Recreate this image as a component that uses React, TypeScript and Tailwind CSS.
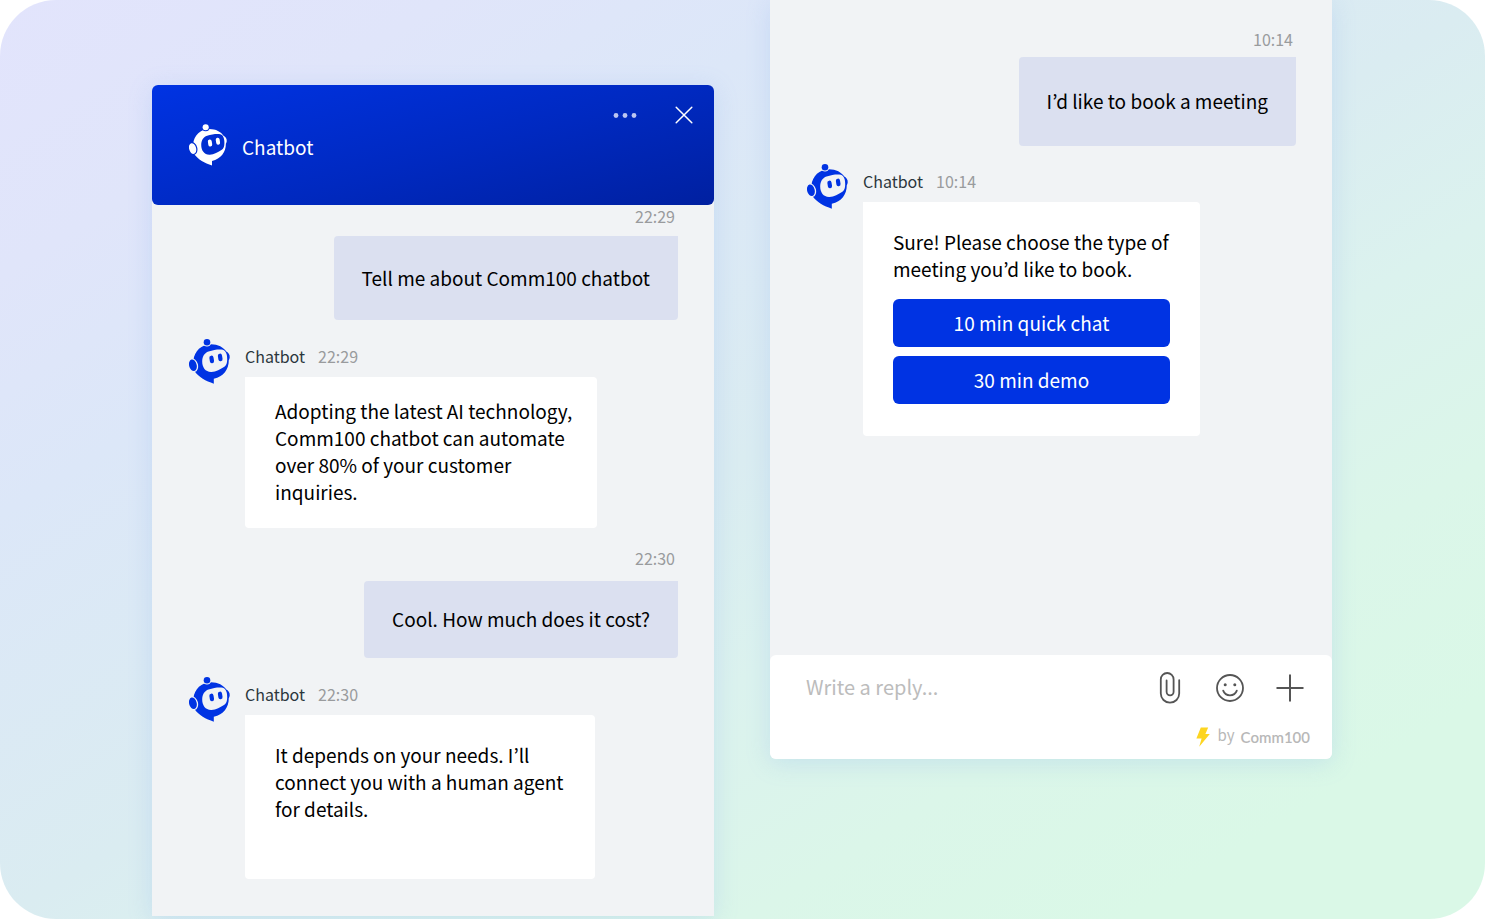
import { useId, type ReactNode } from "react";

const BODY = "text-[19px] leading-[27px]";

function RobotIcon({ className }: { className: string }) {
  const id = useId();
  return (
    <svg viewBox="0 0 41 45" className={className} fill="currentColor" aria-hidden="true">
      <mask id={id} maskUnits="userSpaceOnUse" x="0" y="0" width="42" height="46">
        <rect width="42" height="46" fill="white" />
        <circle cx="18" cy="3.3" r="4.3" fill="black" />
        <ellipse cx="4" cy="26.3" rx="5" ry="7" transform="rotate(-14 4 26.3)" fill="black" />
        <path
          d="M19.5 12.6C25 10.7 30 10.2 33.8 10.8C37 11.4 38.4 16 38.2 20.5C38.1 24 37.4 26.4 35.4 27.7C31.5 30.2 27 32.8 22.4 33C16.5 33.2 13.2 28.6 13.2 22.6C13.2 17.4 15.6 14 19.5 12.6Z"
          fill="black"
        />
      </mask>
      <g mask={`url(#${id})`}>
        <path d="M22 5.2C29 5.2 34.6 8.3 37.3 12.6C39.5 13.8 41 16 40.7 18.4C40.5 19.8 40.1 20.4 39.8 21C39.8 30.5 34.5 37.6 24.8 39.8L24.8 44.7C17 42.3 9.5 38 5.8 32.6C4.2 28.8 4 25.5 4.4 21.5C5.4 12 12.5 5.2 22 5.2Z" />
      </g>
      <circle cx="18" cy="3.3" r="3.3" />
      <ellipse cx="3.9" cy="26.3" rx="3.8" ry="5.9" transform="rotate(-14 3.9 26.3)" />
      <rect x="20.6" y="16.6" width="4.2" height="7.6" rx="2.1" transform="rotate(-9 22.7 20.4)" />
      <rect x="29.1" y="14.6" width="4.2" height="7.6" rx="2.1" transform="rotate(-9 31.2 18.4)" />
    </svg>
  );
}

function UserMessage({ time, gap, bubble, children }: { time: string; gap: string; bubble: string; children: ReactNode }) {
  return (
    <div className={`flex flex-col items-end ${gap}`}>
      <time className="pr-[3px] text-[16px] leading-[22px] text-[#999b9d]">{time}</time>
      <p className={`flex items-center rounded-[4px] rounded-tr-none bg-[#dbe0f0] px-7 pb-0.5 ${BODY} ${bubble}`}>{children}</p>
    </div>
  );
}

function BotMessage({ time, bubble, children }: { time: string; bubble: string; children: ReactNode }) {
  return (
    <div className="flex items-start gap-[15px]">
      <RobotIcon className="h-[45px] w-[41px] shrink-0 text-[#0033e3]" />
      <div className="flex min-w-0 flex-col items-start gap-2.5 pt-1.5">
        <div className="flex gap-[13px] text-[16px] leading-[22px]">
          <span className="text-[#2b363c]">Chatbot</span>
          <time className="text-[#999b9d]">{time}</time>
        </div>
        <div className={`rounded-[4px] rounded-tl-none bg-white pr-[22px] pl-[30px] ${BODY} ${bubble}`}>{children}</div>
      </div>
    </div>
  );
}

function ChoiceButton({ children }: { children: ReactNode }) {
  return (
    <button type="button" className={`h-12 w-full rounded-[6px] bg-[#0033e3] pb-0.5 text-center text-white ${BODY}`}>
      {children}
    </button>
  );
}

const ICON_LINE = {
  fill: "none",
  stroke: "currentColor",
  strokeWidth: 1.8,
  strokeLinecap: "round",
  strokeLinejoin: "round",
} as const;

function Composer() {
  return (
    <form className="rounded-[6px] bg-white px-[22px] pt-3 pb-2.5">
      <div className="flex h-10 items-center pr-1.5 pl-3.5">
        <input
          type="text"
          aria-label="Write a reply"
          placeholder="Write a reply..."
          className="min-w-0 flex-1 bg-transparent text-[20px] leading-7 text-black outline-none placeholder:text-[#bcbcbc]"
        />
        <div className="flex items-center gap-8 pt-px text-[#555]">
          <button type="button" aria-label="Attach file">
            <svg viewBox="0 0 28 32" className="h-8 w-7" {...ICON_LINE}>
              <path d="M23.2 8.2V21.5A9.2 9.2 0 0 1 4.8 21.5V7.4A6.4 6.4 0 0 1 17.6 7.4V19.8A3.5 3.5 0 0 1 10.6 19.8V8.4" />
            </svg>
          </button>
          <button type="button" aria-label="Insert emoji">
            <svg viewBox="0 0 28 28" className="size-7" {...ICON_LINE}>
              <circle cx="14" cy="14" r="13" />
              <path d="M7.2 16.6C8.4 19.8 10.9 21.3 14 21.3S19.6 19.8 20.8 16.6" />
              <circle cx="9.2" cy="10.8" r="1.5" fill="currentColor" stroke="none" />
              <circle cx="18.8" cy="10.8" r="1.5" fill="currentColor" stroke="none" />
            </svg>
          </button>
          <button type="button" aria-label="More options">
            <svg viewBox="0 0 28 28" className="size-7" fill="none" stroke="currentColor" strokeWidth="2">
              <path d="M14 .5V27.5M.5 14H27.5" />
            </svg>
          </button>
        </div>
      </div>
      <div className="mt-[18px] flex h-6 items-center justify-end text-[#b8b8b8]">
        <svg viewBox="0 0 14 20" className="mr-2 h-5 w-3.5" fill="#fdd521" aria-hidden="true">
          <path d="M4.8.5H12.2L9.4 7H13.8L3.2 19.7L5.6 11.5H.4Z" />
        </svg>
        <span className="mr-1.5 pb-1 text-[15px] leading-5">by</span>
        <span className="font-[Lato] text-[15px] leading-6 font-semibold">Comm100</span>
      </div>
    </form>
  );
}

const PANEL = "min-w-0 flex-1 bg-[#f1f3f5] shadow-[0_4px_24px_rgba(120,165,235,0.22)]";

export default function App() {
  return (
    <main className="bg-white pb-px font-['Noto_Sans_CJK_KR',sans-serif] text-black">
      <div className="flex items-start gap-14 overflow-hidden rounded-[56px] bg-[linear-gradient(to_bottom_right,#e2e4fc_0%,#e0e5fa_15%,#dce7f8_28%,#daecf1_50%,#dbf2ee_62%,#dbf6e9_75%,#daf8e7_88%)] pr-[153px] pb-[3px] pl-[152px]">
        <section aria-label="Chatbot conversation" className={`mt-[85px] rounded-t-[6px] ${PANEL}`}>
          <header className="flex h-[120px] items-start justify-between rounded-[6px] bg-[linear-gradient(165deg,#0033e3_0%,#0029c0_55%,#0020a0_100%)] pr-[21px] pl-[37px] text-white">
            <div className="flex items-center gap-[15px] pt-[39px]">
              <RobotIcon className="h-[42px] w-[38px]" />
              <h1 className="pt-[3px] text-[19px] leading-7">Chatbot</h1>
            </div>
            <div className="flex items-center gap-[38px] pt-[21px]">
              <button type="button" aria-label="Menu">
                <svg viewBox="0 0 24 18" className="h-[18px] w-6" fill="#bcc6f1">
                  <circle cx="3" cy="9.5" r="2.4" />
                  <circle cx="12" cy="9.5" r="2.4" />
                  <circle cx="21" cy="9.5" r="2.4" />
                </svg>
              </button>
              <button type="button" aria-label="Close">
                <svg viewBox="0 0 18 18" className="size-[18px]" {...ICON_LINE} strokeWidth={1.5}>
                  <path d="M1.2 1.2L16.8 16.8M16.8 1.2L1.2 16.8" />
                </svg>
              </button>
            </div>
          </header>
          <div className="flex flex-col gap-[19px] pr-9 pb-[37px] pl-[37px]">
            <UserMessage time="22:29" gap="gap-[9px]" bubble="h-[84px]">
              Tell me about Comm100 chatbot
            </UserMessage>
            <BotMessage time="22:29" bubble="w-[352px] pt-5 pb-[23px]">
              Adopting the latest AI technology, Comm100 chatbot can automate over 80% of your customer inquiries.
            </BotMessage>
            <UserMessage time="22:30" gap="gap-3" bubble="h-[77px]">
              Cool. How much does it cost?
            </UserMessage>
            <BotMessage time="22:30" bubble="h-[164px] w-[350px] pt-[26px]">
              It depends on your needs. I’ll connect you with a human agent for details.
            </BotMessage>
          </div>
        </section>

        <section aria-label="Booking conversation" className={`rounded-b-[6px] ${PANEL}`}>
          <div className="flex min-h-[655px] flex-col gap-[18px] pt-7 pr-9 pl-[37px]">
            <UserMessage time="10:14" gap="gap-[7px]" bubble="h-[89px]">
              I’d like to book a meeting
            </UserMessage>
            <BotMessage time="10:14" bubble="w-[337px] pt-[26px] pb-8">
              <p>Sure! Please choose the type of meeting you’d like to book.</p>
              <div className="mt-[17px] mr-2 flex flex-col gap-[9px]">
                <ChoiceButton>10 min quick chat</ChoiceButton>
                <ChoiceButton>30 min demo</ChoiceButton>
              </div>
            </BotMessage>
          </div>
          <Composer />
        </section>
      </div>
    </main>
  );
}
